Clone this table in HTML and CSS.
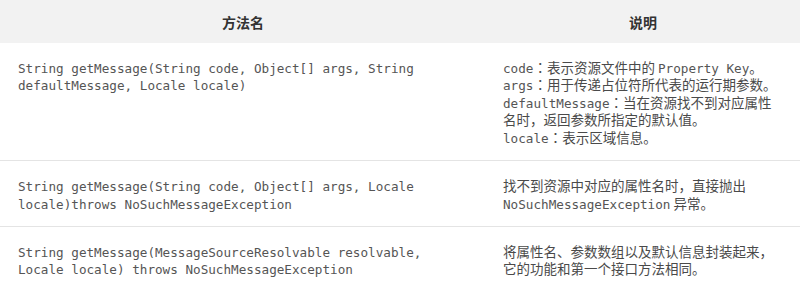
FILE: index.html
```html
<!DOCTYPE html>
<html lang="zh-CN">
<head>
<meta charset="utf-8">
<title>MessageSource</title>
<link rel="stylesheet" href="styles.css">
</head>
<body>
<table class="api-table">
  <colgroup>
    <col class="col-method">
    <col class="col-desc">
  </colgroup>
  <thead>
    <tr>
      <th>方法名</th>
      <th>说明</th>
    </tr>
  </thead>
  <tbody>
    <tr>
      <td class="method"><code>String getMessage(String code, Object[] args, String defaultMessage, Locale locale)</code></td>
      <td class="desc"><code>code</code><span class="colon" lang="ja">：</span>表示资源文件中的 <code>Property Key</code>。<br><code>args</code><span class="colon" lang="ja">：</span>用于传递占位符所代表的运行期参数。<br><code>defaultMessage</code><span class="colon" lang="ja">：</span>当在资源找不到对应属性名时，返回参数所指定的默认值。<br><code>locale</code><span class="colon" lang="ja">：</span>表示区域信息。</td>
    </tr>
    <tr>
      <td class="method"><code>String getMessage(String code, Object[] args, Locale locale)throws NoSuchMessageException</code></td>
      <td class="desc">找不到资源中对应的属性名时，直接抛出 <code>NoSuchMessageException</code> 异常。</td>
    </tr>
    <tr>
      <td class="method"><code>String getMessage(MessageSourceResolvable resolvable, Locale locale) throws NoSuchMessageException</code></td>
      <td class="desc">将属性名、参数数组以及默认信息封装起来，它的功能和第一个接口方法相同。</td>
    </tr>
  </tbody>
</table>
</body>
</html>
```
FILE: styles.css
```css
html, body {
  margin: 0;
  padding: 0;
  background: #ffffff;
}

body {
  font-family: "Noto Sans CJK SC", "Noto Sans", sans-serif;
  font-size: 13.5px;
  color: #4a4a4a;
}

.api-table {
  width: 800px;
  border-collapse: collapse;
  table-layout: fixed;
}

.col-method {
  width: 486px;
}

.col-desc {
  width: 314px;
}

.api-table th {
  background: #f2f2f2;
  color: #333333;
  font-weight: 700;
  font-size: 14px;
  line-height: 18px;
  height: 43px;
  padding: 0 18px;
  text-align: center;
  box-sizing: border-box;
}

.api-table td {
  vertical-align: top;
  line-height: 17.6px;
  padding: 15.5px 18px 14px;
  border-bottom: 1px solid #e4e4e4;
}

.api-table td.desc {
  padding-left: 17px;
}

.api-table code {
  font-family: "DejaVu Sans Mono", "Liberation Mono", monospace;
  font-size: 12.65px;
  line-height: 1;
  color: #555555;
}

.colon {
  font-family: "Noto Sans CJK JP", "Noto Sans CJK SC", sans-serif;
  line-height: 1;
}
```
